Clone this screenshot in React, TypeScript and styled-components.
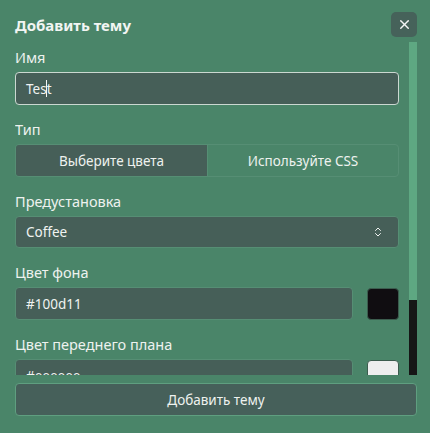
import React from 'react'
import styled, { createGlobalStyle } from 'styled-components'
import { X, ChevronsUpDown } from 'lucide-react'

const GlobalStyle = createGlobalStyle`
    html, body {
        margin: 0;
        padding: 0;
        background: #4a8569;
    }
    * {
        box-sizing: border-box;
    }
`

const Panel = styled.div`
    width: 430px;
    height: 433px;
    padding: 12px 13px 0 15px;
    display: flex;
    flex-direction: column;
    background: #4a8569;
    color: #eef2ef;
    font-family: "Noto Sans", "Open Sans", sans-serif;
`

const Header = styled.div`
    display: flex;
    align-items: center;
    justify-content: space-between;
    height: 25px;
    flex-shrink: 0;
`

const Title = styled.h2`
    margin: 0;
    font-size: 15px;
    font-weight: 700;
    color: #f2f5f3;
`

const CloseButton = styled.button`
    width: 26px;
    height: 25px;
    border: none;
    border-radius: 5px;
    background: #46625a;
    color: #f4f6f5;
    display: flex;
    align-items: center;
    justify-content: center;
    padding: 0;
`

// the overlay scrollbar of headless chrome is invisible, so the bar is drawn next to the list
const ScrollFrame = styled.div`
    margin-top: 5px;
    height: 333px;
    flex-shrink: 0;
    display: flex;
    gap: 10px;
`

const ScrollArea = styled.div`
    flex: 1;
    min-width: 0;
    overflow-y: auto;
    scrollbar-width: none;
    padding: 5px 0 7px 0;
    display: flex;
    flex-direction: column;
    gap: 14px;
`

const ScrollTrack = styled.div`
    width: 8px;
    flex-shrink: 0;
    background: #161616;
    display: flex;
    flex-direction: column;
`

const ScrollThumb = styled.div<{ $size: number }>`
    height: ${p => p.$size}%;
    background: #5ea882;
`

const Field = styled.div`
    display: flex;
    flex-direction: column;
    flex-shrink: 0;
    gap: 5px;
`

const Label = styled.label`
    font-size: 14.5px;
    line-height: 20px;
    color: #eef2ef;
`

const TextBox = styled.div<{ $focused?: boolean }>`
    height: 33px;
    width: 100%;
    min-width: 0;
    display: flex;
    align-items: center;
    padding: 0 10px;
    border-radius: 4px;
    background: #465f58;
    border: 1px solid ${p => (p.$focused ? '#cbd8d1' : '#568e74')};
    font-size: 13.5px;
    color: #f0f3f1;
`

const Caret = styled.span`
    display: inline-block;
    width: 1px;
    height: 17px;
    margin: 0 -0.5px;
    background: #f4f6f5;
`

const Segmented = styled.div`
    height: 33px;
    display: grid;
    grid-template-columns: 1fr 1fr;
    border: 1px solid #568e74;
    border-radius: 4px;
    overflow: hidden;
`

const Segment = styled.button<{ $active?: boolean }>`
    border: none;
    background: ${p => (p.$active ? '#465f58' : 'transparent')};
    color: #eef2ef;
    font-family: inherit;
    font-size: 13.5px;
    padding: 0;
    & + & {
        border-left: 1px solid #568e74;
    }
`

const Select = styled(TextBox)`
    height: 32px;
    justify-content: space-between;
    padding-right: 14px;
`

const ColorRow = styled.div`
    display: flex;
    align-items: center;
    gap: 14px;
`

const Swatch = styled.div<{ $color: string }>`
    width: 32px;
    height: 32px;
    border-radius: 4px;
    border: 1px solid #3c5c4e;
    background: ${p => p.$color};
    flex-shrink: 0;
`

const SubmitButton = styled.button`
    margin-top: 8px;
    width: 100%;
    height: 33px;
    flex-shrink: 0;
    border-radius: 4px;
    border: 1px solid #5f9f80;
    background: #46605a;
    color: #eef2ef;
    font-family: inherit;
    font-size: 13.5px;
`

const colors = [
    { label: 'Цвет фона', value: '#100d11' },
    { label: 'Цвет переднего плана', value: '#eeeeee' },
    { label: 'Цвет акцента', value: '#5ea882' },
]

export default function App() {
    return (
        <>
            <GlobalStyle />
            <Panel>
                <Header>
                    <Title>Добавить тему</Title>
                    <CloseButton aria-label="close">
                        <X size={15} strokeWidth={2.2} />
                    </CloseButton>
                </Header>
                <ScrollFrame>
                    <ScrollArea>
                        <Field>
                            <Label>Имя</Label>
                            <TextBox $focused>
                                Tes<Caret />t
                            </TextBox>
                        </Field>
                        <Field>
                            <Label>Тип</Label>
                            <Segmented>
                                <Segment $active>Выберите цвета</Segment>
                                <Segment>Используйте CSS</Segment>
                            </Segmented>
                        </Field>
                        <Field>
                            <Label>Предустановка</Label>
                            <Select>
                                Coffee
                                <ChevronsUpDown size={12} strokeWidth={2} />
                            </Select>
                        </Field>
                        {colors.map(c => (
                            <Field key={c.label}>
                                <Label>{c.label}</Label>
                                <ColorRow>
                                    <TextBox>{c.value}</TextBox>
                                    <Swatch $color={c.value} />
                                </ColorRow>
                            </Field>
                        ))}
                    </ScrollArea>
                    <ScrollTrack>
                        <ScrollThumb $size={77.5} />
                    </ScrollTrack>
                </ScrollFrame>
                <SubmitButton>Добавить тему</SubmitButton>
            </Panel>
        </>
    )
}
